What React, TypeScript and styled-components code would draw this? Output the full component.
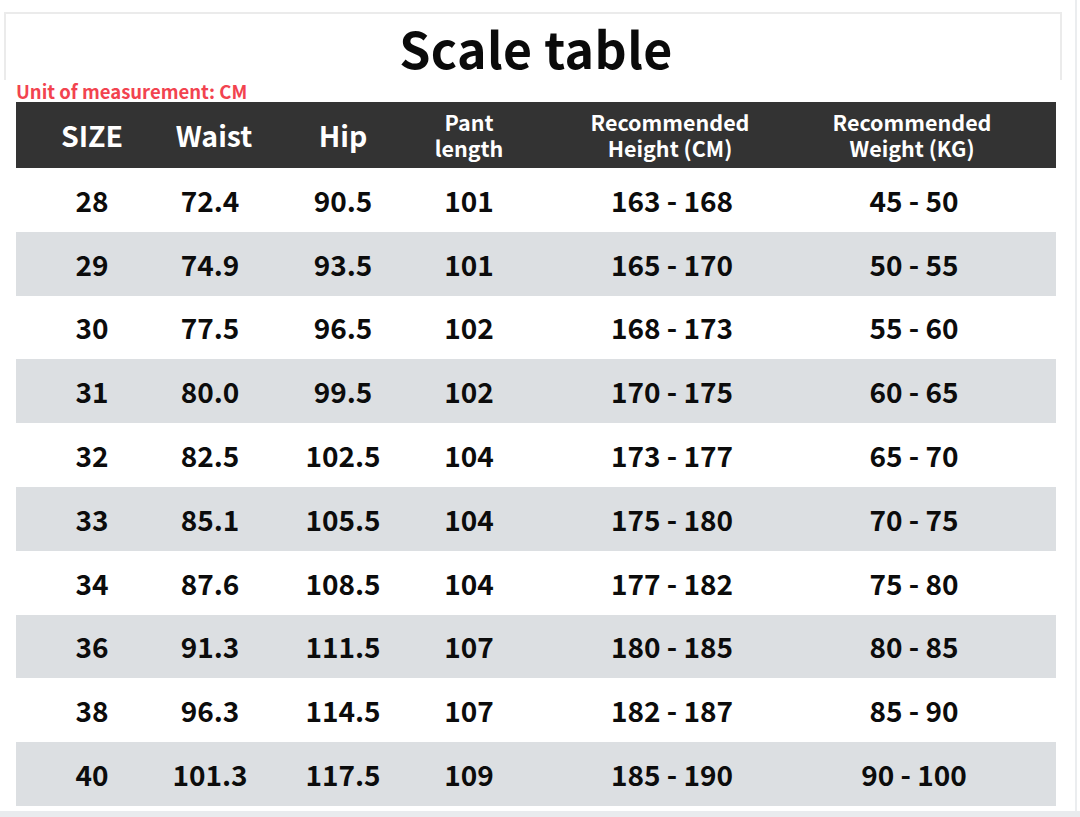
import React from "react";
import styled, { createGlobalStyle } from "styled-components";

const Global = createGlobalStyle`
  html, body { margin: 0; padding: 0; background: #ffffff; }
  body { font-family: "Noto Sans CJK SC", "Noto Sans", sans-serif; }
`;

const Page = styled.div`
  position: relative;
  width: 1080px;
  height: 817px;
  box-sizing: border-box;
  background: #ffffff;
  overflow: hidden;
  display: flex;
  flex-direction: column;
  padding-top: 12px;
`;

const EdgeLine = styled.div`
  position: absolute;
  top: 0;
  bottom: 0;
  left: 1075px;
  width: 2px;
  background: #ebedef;
`;

const BottomBand = styled.div`
  position: absolute;
  left: 0;
  right: 0;
  bottom: 0;
  height: 6px;
  background: #e9ebee;
`;

const TitleBox = styled.div`
  margin-left: 4px;
  width: 1058px;
  height: 68px;
  box-sizing: border-box;
  border: 2px solid #ebebeb;
  border-bottom: none;
  display: flex;
  align-items: center;
  justify-content: center;
  padding-left: 6px;
`;

const Title = styled.h1`
  margin: 0;
  font-family: "Noto Sans CJK SC", "Noto Sans", sans-serif;
  font-weight: 700;
  font-size: 50px;
  line-height: 60px;
  color: #0a0a0a;
  letter-spacing: 0.4px;
`;

const Unit = styled.div`
  margin-left: 16px;
  height: 22px;
  font-family: "Noto Sans CJK SC", "Noto Sans", sans-serif;
  font-weight: 700;
  font-size: 18.5px;
  line-height: 22px;
  color: #f2434f;
`;

const Table = styled.div`
  margin-left: 16px;
  width: 1040px;
  display: flex;
  flex-direction: column;
`;

const cols = "152px 92px 166px 86px 320px 224px";

const HeadRow = styled.div`
  display: grid;
  grid-template-columns: ${cols};
  height: 66px;
  background: #333333;
  align-items: center;
`;

const HeadCell = styled.div<{ $small?: boolean; $shift?: number }>`
  text-align: center;
  color: #ffffff;
  font-family: "Noto Sans CJK SC", "Noto Sans", sans-serif;
  font-weight: 700;
  font-size: ${(p) => (p.$small ? "21.5px" : "28.5px")};
  line-height: ${(p) => (p.$small ? "26px" : "34px")};
  padding-right: ${(p) => p.$shift ?? 0}px;
`;

const Row = styled.div<{ $alt: boolean }>`
  display: grid;
  grid-template-columns: ${cols};
  height: 63.8px;
  background: ${(p) => (p.$alt ? "#dcdfe2" : "#ffffff")};
  align-items: center;
`;

const Cell = styled.div<{ $shift?: number }>`
  text-align: center;
  color: #0c0c0c;
  font-family: "Noto Sans CJK SC", "Noto Sans", sans-serif;
  font-weight: 700;
  font-size: 28px;
  line-height: 34px;
  padding-right: ${(p) => p.$shift ?? 0}px;
`;

const data: string[][] = [
  ["28", "72.4", "90.5", "101", "163 - 168", "45 - 50"],
  ["29", "74.9", "93.5", "101", "165 - 170", "50 - 55"],
  ["30", "77.5", "96.5", "102", "168 - 173", "55 - 60"],
  ["31", "80.0", "99.5", "102", "170 - 175", "60 - 65"],
  ["32", "82.5", "102.5", "104", "173 - 177", "65 - 70"],
  ["33", "85.1", "105.5", "104", "175 - 180", "70 - 75"],
  ["34", "87.6", "108.5", "104", "177 - 182", "75 - 80"],
  ["36", "91.3", "111.5", "107", "180 - 185", "80 - 85"],
  ["38", "96.3", "114.5", "107", "182 - 187", "85 - 90"],
  ["40", "101.3", "117.5", "109", "185 - 190", "90 - 100"],
];

const bodyShift = [0, 8, 0, 0, 0, 60];

export default function App() {
  return (
    <>
      <Global />
      <Page>
        <EdgeLine />
        <TitleBox>
          <Title>Scale table</Title>
        </TitleBox>
        <Unit>Unit of measurement: CM</Unit>
        <Table>
          <HeadRow>
            <HeadCell>SIZE</HeadCell>
            <HeadCell>Waist</HeadCell>
            <HeadCell>Hip</HeadCell>
            <HeadCell $small>
              Pant
              <br />
              length
            </HeadCell>
            <HeadCell $small $shift={4}>
              Recommended
              <br />
              Height (CM)
            </HeadCell>
            <HeadCell $small $shift={64}>
              Recommended
              <br />
              Weight (KG)
            </HeadCell>
          </HeadRow>
          {data.map((r, i) => (
            <Row key={r[0]} $alt={i % 2 === 1}>
              {r.map((v, j) => (
                <Cell key={j} $shift={bodyShift[j]}>
                  {v}
                </Cell>
              ))}
            </Row>
          ))}
        </Table>
        <BottomBand />
      </Page>
    </>
  );
}
